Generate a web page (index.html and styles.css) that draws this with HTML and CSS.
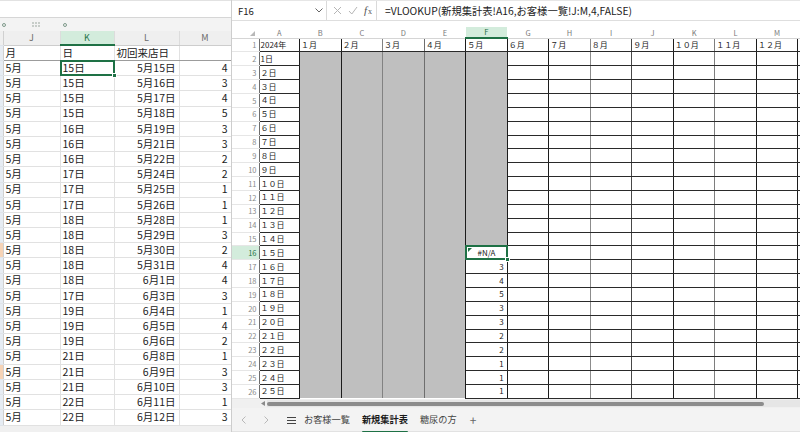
FILE: index.html
```html
<!DOCTYPE html>
<html lang="ja">
<head>
<meta charset="utf-8">
<title>Excel</title>
<link rel="stylesheet" href="styles.css">
</head>
<body>
<div class="app">
  <section class="left">
    <div class="ltop"></div>
    <div class="outline">
      <span class="ring"></span>
      <svg class="grip" width="8" height="5" viewBox="0 0 8 5"><g fill="#7a8a80"><circle cx="1" cy="1" r="0.7"/><circle cx="4" cy="1" r="0.7"/><circle cx="7" cy="1" r="0.7"/><circle cx="1" cy="4" r="0.7"/><circle cx="4" cy="4" r="0.7"/><circle cx="7" cy="4" r="0.7"/></g></svg>
      <span class="ring ring2"></span>
    </div>
    <table class="lgrid">
      <colgroup><col class="c-stub"><col class="c-j"><col class="c-k"><col class="c-l"><col class="c-m"></colgroup>
      <thead>
        <tr class="colhdr"><th class="stub"></th><th>J</th><th class="sel">K</th><th>L</th><th>M</th></tr>
      </thead>
      <tbody>
        <tr class="hdrrow"><th class="stub"></th><td>月</td><td>日</td><td>初回来店日</td><td></td></tr>
        <tr><th class="stub"></th><td>5月</td><td class="active">15日<span class="handle"></span></td><td class="r">5月15日</td><td class="r">4</td></tr>
        <tr><th class="stub"></th><td>5月</td><td>15日</td><td class="r">5月16日</td><td class="r">3</td></tr>
        <tr><th class="stub"></th><td>5月</td><td>15日</td><td class="r">5月17日</td><td class="r">4</td></tr>
        <tr><th class="stub"></th><td>5月</td><td>15日</td><td class="r">5月18日</td><td class="r">5</td></tr>
        <tr><th class="stub"></th><td>5月</td><td>16日</td><td class="r">5月19日</td><td class="r">3</td></tr>
        <tr><th class="stub"></th><td>5月</td><td>16日</td><td class="r">5月21日</td><td class="r">3</td></tr>
        <tr><th class="stub"></th><td>5月</td><td>16日</td><td class="r">5月22日</td><td class="r">2</td></tr>
        <tr><th class="stub"></th><td>5月</td><td>17日</td><td class="r">5月24日</td><td class="r">2</td></tr>
        <tr><th class="stub"></th><td>5月</td><td>17日</td><td class="r">5月25日</td><td class="r">1</td></tr>
        <tr><th class="stub"></th><td>5月</td><td>17日</td><td class="r">5月26日</td><td class="r">1</td></tr>
        <tr><th class="stub"></th><td>5月</td><td>18日</td><td class="r">5月28日</td><td class="r">1</td></tr>
        <tr><th class="stub"></th><td>5月</td><td>18日</td><td class="r">5月29日</td><td class="r">3</td></tr>
        <tr><th class="stub o"></th><td>5月</td><td>18日</td><td class="r">5月30日</td><td class="r">2</td></tr>
        <tr><th class="stub"></th><td>5月</td><td>18日</td><td class="r">5月31日</td><td class="r">4</td></tr>
        <tr><th class="stub"></th><td>5月</td><td>18日</td><td class="r">6月1日</td><td class="r">4</td></tr>
        <tr><th class="stub"></th><td>5月</td><td>17日</td><td class="r">6月3日</td><td class="r">3</td></tr>
        <tr><th class="stub"></th><td>5月</td><td>19日</td><td class="r">6月4日</td><td class="r">1</td></tr>
        <tr><th class="stub"></th><td>5月</td><td>19日</td><td class="r">6月5日</td><td class="r">4</td></tr>
        <tr><th class="stub"></th><td>5月</td><td>19日</td><td class="r">6月6日</td><td class="r">2</td></tr>
        <tr><th class="stub"></th><td>5月</td><td>21日</td><td class="r">6月8日</td><td class="r">1</td></tr>
        <tr><th class="stub o"></th><td>5月</td><td>21日</td><td class="r">6月9日</td><td class="r">3</td></tr>
        <tr><th class="stub"></th><td>5月</td><td>21日</td><td class="r">6月10日</td><td class="r">3</td></tr>
        <tr><th class="stub"></th><td>5月</td><td>22日</td><td class="r">6月11日</td><td class="r">1</td></tr>
        <tr><th class="stub"></th><td>5月</td><td>22日</td><td class="r">6月12日</td><td class="r">3</td></tr>
      </tbody>
    </table>
  </section>

  <section class="right">
    <div class="fbar">
      <div class="namebox">
        <span>F16</span>
        <svg width="8" height="5" viewBox="0 0 8 5"><polyline points="0.5,0.5 4,4 7.5,0.5" fill="none" stroke="#666" stroke-width="1"/></svg>
      </div>
      <div class="fxbtns">
        <svg width="9" height="9" viewBox="0 0 9 9"><path d="M1 1 L8 8 M8 1 L1 8" stroke="#b5b5b5" stroke-width="1" fill="none"/></svg>
        <svg width="10" height="9" viewBox="0 0 10 9"><polyline points="1,5 3.8,8 9,1" stroke="#b5b5b5" stroke-width="1" fill="none"/></svg>
        <span class="fx"><i>f</i><span>x</span></span>
      </div>
      <div class="formula">=VLOOKUP(新規集計表!A16,お客様一覧!J:M,4,FALSE)</div>
    </div>

    <div class="sheet">
      <table class="rgrid">
        <colgroup><col class="c-rh"><col class="c-a"><col><col><col><col><col><col><col><col><col><col><col><col><col class="c-x"></colgroup>
        <thead>
          <tr><th class="corner"><span class="tri"></span></th><th>A</th><th>B</th><th>C</th><th>D</th><th>E</th><th class="sel">F</th><th>G</th><th>H</th><th>I</th><th>J</th><th>K</th><th>L</th><th>M</th><th class="x"></th></tr>
        </thead>
        <tbody>
          <tr><th>1</th><td>2024年</td><td>１月</td><td>２月</td><td>３月</td><td>４月</td><td>５月</td><td>６月</td><td>７月</td><td>８月</td><td>９月</td><td>１０月</td><td>１１月</td><td>１２月</td><td></td></tr>
          <tr><th>2</th><td>1日</td><td class="g"></td><td class="g"></td><td class="g"></td><td class="g"></td><td class="g"></td><td></td><td></td><td></td><td></td><td></td><td></td><td></td><td></td></tr>
          <tr><th>3</th><td>２日</td><td class="g"></td><td class="g"></td><td class="g"></td><td class="g"></td><td class="g"></td><td></td><td></td><td></td><td></td><td></td><td></td><td></td><td></td></tr>
          <tr><th>4</th><td>３日</td><td class="g"></td><td class="g"></td><td class="g"></td><td class="g"></td><td class="g"></td><td></td><td></td><td></td><td></td><td></td><td></td><td></td><td></td></tr>
          <tr><th>5</th><td>４日</td><td class="g"></td><td class="g"></td><td class="g"></td><td class="g"></td><td class="g"></td><td></td><td></td><td></td><td></td><td></td><td></td><td></td><td></td></tr>
          <tr><th>6</th><td>５日</td><td class="g"></td><td class="g"></td><td class="g"></td><td class="g"></td><td class="g"></td><td></td><td></td><td></td><td></td><td></td><td></td><td></td><td></td></tr>
          <tr><th>7</th><td>６日</td><td class="g"></td><td class="g"></td><td class="g"></td><td class="g"></td><td class="g"></td><td></td><td></td><td></td><td></td><td></td><td></td><td></td><td></td></tr>
          <tr><th>8</th><td>７日</td><td class="g"></td><td class="g"></td><td class="g"></td><td class="g"></td><td class="g"></td><td></td><td></td><td></td><td></td><td></td><td></td><td></td><td></td></tr>
          <tr><th>9</th><td>８日</td><td class="g"></td><td class="g"></td><td class="g"></td><td class="g"></td><td class="g"></td><td></td><td></td><td></td><td></td><td></td><td></td><td></td><td></td></tr>
          <tr><th>10</th><td>９日</td><td class="g"></td><td class="g"></td><td class="g"></td><td class="g"></td><td class="g"></td><td></td><td></td><td></td><td></td><td></td><td></td><td></td><td></td></tr>
          <tr><th>11</th><td>１０日</td><td class="g"></td><td class="g"></td><td class="g"></td><td class="g"></td><td class="g"></td><td></td><td></td><td></td><td></td><td></td><td></td><td></td><td></td></tr>
          <tr><th>12</th><td>１１日</td><td class="g"></td><td class="g"></td><td class="g"></td><td class="g"></td><td class="g"></td><td></td><td></td><td></td><td></td><td></td><td></td><td></td><td></td></tr>
          <tr><th>13</th><td>１２日</td><td class="g"></td><td class="g"></td><td class="g"></td><td class="g"></td><td class="g"></td><td></td><td></td><td></td><td></td><td></td><td></td><td></td><td></td></tr>
          <tr><th>14</th><td>１３日</td><td class="g"></td><td class="g"></td><td class="g"></td><td class="g"></td><td class="g"></td><td></td><td></td><td></td><td></td><td></td><td></td><td></td><td></td></tr>
          <tr><th>15</th><td>１４日</td><td class="g"></td><td class="g"></td><td class="g"></td><td class="g"></td><td class="g"></td><td></td><td></td><td></td><td></td><td></td><td></td><td></td><td></td></tr>
          <tr><th class="sel">16</th><td>１５日</td><td class="g"></td><td class="g"></td><td class="g"></td><td class="g"></td><td class="cur"><span class="err"></span>#N/A<span class="handle"></span></td><td></td><td></td><td></td><td></td><td></td><td></td><td></td><td></td></tr>
          <tr><th>17</th><td>１６日</td><td class="g"></td><td class="g"></td><td class="g"></td><td class="g"></td><td class="n">3</td><td></td><td></td><td></td><td></td><td></td><td></td><td></td><td></td></tr>
          <tr><th>18</th><td>１７日</td><td class="g"></td><td class="g"></td><td class="g"></td><td class="g"></td><td class="n">4</td><td></td><td></td><td></td><td></td><td></td><td></td><td></td><td></td></tr>
          <tr><th>19</th><td>１８日</td><td class="g"></td><td class="g"></td><td class="g"></td><td class="g"></td><td class="n">5</td><td></td><td></td><td></td><td></td><td></td><td></td><td></td><td></td></tr>
          <tr><th>20</th><td>１９日</td><td class="g"></td><td class="g"></td><td class="g"></td><td class="g"></td><td class="n">3</td><td></td><td></td><td></td><td></td><td></td><td></td><td></td><td></td></tr>
          <tr><th>21</th><td>２０日</td><td class="g"></td><td class="g"></td><td class="g"></td><td class="g"></td><td class="n">3</td><td></td><td></td><td></td><td></td><td></td><td></td><td></td><td></td></tr>
          <tr><th>22</th><td>２１日</td><td class="g"></td><td class="g"></td><td class="g"></td><td class="g"></td><td class="n">2</td><td></td><td></td><td></td><td></td><td></td><td></td><td></td><td></td></tr>
          <tr><th>23</th><td>２２日</td><td class="g"></td><td class="g"></td><td class="g"></td><td class="g"></td><td class="n">2</td><td></td><td></td><td></td><td></td><td></td><td></td><td></td><td></td></tr>
          <tr><th>24</th><td>２３日</td><td class="g"></td><td class="g"></td><td class="g"></td><td class="g"></td><td class="n">1</td><td></td><td></td><td></td><td></td><td></td><td></td><td></td><td></td></tr>
          <tr><th>25</th><td>２４日</td><td class="g"></td><td class="g"></td><td class="g"></td><td class="g"></td><td class="n">1</td><td></td><td></td><td></td><td></td><td></td><td></td><td></td><td></td></tr>
          <tr><th>26</th><td>２５日</td><td class="g"></td><td class="g"></td><td class="g"></td><td class="g"></td><td class="n">1</td><td></td><td></td><td></td><td></td><td></td><td></td><td></td><td></td></tr>
        </tbody>
      </table>
    </div>

    <div class="hscroll">
      <svg class="sarrow" width="4" height="5" viewBox="0 0 4 5"><polygon points="4,0 4,5 0,2.5" fill="#8a8a8a"/></svg>
      <div class="track"><div class="thumb"></div></div>
    </div>

    <div class="tabs">
      <span class="nav"><svg width="5" height="8" viewBox="0 0 5 8"><polyline points="4.5,0.5 1,4 4.5,7.5" fill="none" stroke="#b8b8b8" stroke-width="1"/></svg></span>
      <span class="nav"><svg width="5" height="8" viewBox="0 0 5 8"><polyline points="0.5,0.5 4,4 0.5,7.5" fill="none" stroke="#b8b8b8" stroke-width="1"/></svg></span>
      <span class="menu"><svg width="9" height="7" viewBox="0 0 9 7"><path d="M0 0.5H9M0 3.5H9M0 6.5H9" stroke="#444" stroke-width="1"/></svg></span>
      <span class="tab">お客様一覧</span>
      <span class="tab active">新規集計表</span>
      <span class="tab">糖尿の方</span>
      <span class="plus">+</span>
    </div>
  </section>
</div>
</body>
</html>
```

FILE: styles.css
```css
* { box-sizing: border-box; margin: 0; padding: 0; }
html, body { width: 800px; height: 432px; overflow: hidden; background: #fff; }
body { font-family: "Noto Sans CJK JP", "Noto Sans", sans-serif; color: #222; }

.app { display: flex; width: 800px; height: 432px; }

/* ---------- left window ---------- */
.left {
  width: 231px; flex: none; display: flex; flex-direction: column;
  background: #f0f0f0; overflow: hidden;
}
.ltop { height: 18px; flex: none; background: #fff; border-top: 1px solid #e2e2e2; border-bottom: 1px solid #d6d6d6; }
.outline { height: 13px; flex: none; display: flex; align-items: center; background: #f3f3f3; padding-left: 2px; }
.ring { width: 4px; height: 4px; border: 1px solid #7f9a8b; border-radius: 50%; }
.grip { margin-left: 26px; }
.ring2 { margin-left: 23px; }

.lgrid { border-collapse: collapse; table-layout: fixed; width: 231px; font-size: 10.5px; background: #fff; }
.c-stub { width: 3px; }
.c-j { width: 57px; }
.c-k { width: 54px; }
.c-l { width: 65px; }
.c-m { width: 52px; }

.lgrid .colhdr th {
  height: 14px; background: #efefef; color: #6a6a6a; font-weight: normal; font-size: 9px;
  border-right: 1px solid #dcdcdc; border-bottom: 1px solid #cdcdcd; line-height: 1;
}
.lgrid .colhdr th.sel { background: #d3ecdc; color: #1e7145; border-bottom: 2px solid #1e7145; }
.lgrid .colhdr th.stub { background: #efefef; }
.lgrid th.stub { background: #e6ecf3; padding: 0; border-right: 1px solid #d0d0d0; border-bottom: 1px solid #dfe4ea; }
.lgrid th.stub.o { background: #f6d3b6; }

.lgrid td {
  height: 15.2px; padding: 0 2px; line-height: 1; white-space: nowrap; overflow: hidden;
  border-right: 1px solid #e1e1e1; border-bottom: 1px solid #e1e1e1;
}
.lgrid .hdrrow td { height: 15.5px; border-bottom-color: #9c9c9c; }
.lgrid td.r { text-align: right; padding-right: 3px; }
.lgrid td.active { position: relative; overflow: visible; }
.lgrid td.active::after {
  content: ""; position: absolute; left: -1px; top: -1px; right: -1px; bottom: -1px;
  border: 2px solid #1e7145;
}
.handle {
  position: absolute; right: -3px; bottom: -3px; width: 5px; height: 5px;
  background: #1e7145; border: 1px solid #fff; z-index: 2;
}

/* ---------- right window ---------- */
.right {
  flex: 1; min-width: 0; display: flex; flex-direction: column;
  border-left: 1px solid #cdcdcd; background: #f3f3f3;
}
.fbar {
  height: 21px; flex: none; display: flex; background: #fff;
  border-top: 1px solid #e6e6e6; border-bottom: 1px solid #dedede;
}
.namebox {
  width: 95px; display: flex; align-items: center; justify-content: space-between;
  padding: 0 3px 0 6px; font-size: 9.5px; color: #222; border-right: 1px solid #dadada;
}
.fxbtns {
  width: 50px; display: flex; align-items: center; gap: 6px; padding-left: 6px;
  border-right: 1px solid #dadada;
}
.fx { font-family: "Liberation Serif", serif; font-size: 11px; color: #555; line-height: 1; }
.fx span { font-size: 8px; margin-left: 1px; }
.formula {
  flex: 1; display: flex; align-items: center; padding-left: 8px;
  font-size: 10.3px; color: #222; white-space: nowrap; overflow: hidden;
}

.sheet { height: 378px; flex: none; background: #fff; padding-top: 6px; overflow: hidden; }

.rgrid { border-collapse: collapse; table-layout: fixed; width: 600px; font-size: 8px; }
.rgrid col { width: 41.5px; }
.rgrid col.c-rh { width: 27px; }
.rgrid col.c-a { width: 40.5px; }
.rgrid col.c-x { width: 34px; }

.rgrid thead th {
  height: 11px; font-size: 7.5px; font-weight: normal; color: #7a7a7a; background: #fff;
  border-bottom: 1px solid #d5d5d5; line-height: 1;
}
.rgrid thead th.sel { background: #d3ecdc; color: #1e7145; border-bottom: 2px solid #1e7145; }
.rgrid thead th.corner { position: relative; }
.tri {
  position: absolute; right: 4px; bottom: 2px; width: 0; height: 0;
  border-left: 5px solid transparent; border-bottom: 5px solid #b8b8b8;
}

.rgrid tbody th {
  font-size: 7.5px; font-weight: normal; color: #8a8a8a; text-align: right; padding-right: 2px;
  background: #fff; border-right: 1px solid #6e6e6e; border-bottom: 1px solid #e6e6e6; line-height: 1;
}
.rgrid tbody th.sel { background: #d3ecdc; color: #1e7145; }

.rgrid td {
  height: 13.87px; padding: 0 1px; line-height: 1; white-space: nowrap; overflow: hidden;
  border-right: 1px solid #1c1c1c; border-bottom: 1px solid #2a2a2a; color: #222;
}
.rgrid td:nth-child(4) { border-right-color: #828282; }
.rgrid td:nth-child(5) { border-right-color: #6e6e6e; }
.rgrid td:nth-child(9) { border-right-color: #8c8c8c; }
.rgrid td:nth-child(10) { border-right-color: #474747; }
.rgrid td:nth-child(12) { border-right-color: #7e7e7e; }
.rgrid td:nth-child(15) { border-right: none; }
.rgrid td.g { background: #bfbfbf; border-bottom: none; }
.rgrid td.n { text-align: right; padding-right: 3px; }
.rgrid td.cur { position: relative; overflow: visible; text-align: center; }
.rgrid td.cur::after {
  content: ""; position: absolute; left: -1px; top: -1px; right: -1px; bottom: -1px;
  border: 2px solid #1e7145;
}
.err {
  position: absolute; left: 2px; top: 2px; width: 0; height: 0;
  border-top: 4px solid #217346; border-right: 4px solid transparent;
}

/* scrollbar */
.hscroll { height: 9px; flex: none; display: flex; align-items: center; background: #f0f0f0; padding-left: 29px; }
.sarrow { flex: none; }
.track { flex: 1; height: 7px; display: flex; align-items: center; background: #e6e6e6; margin-left: 2px; }
.thumb { width: 497px; height: 4px; border-radius: 2px; background: #8c8c8c; }

/* sheet tabs */
.tabs {
  height: 24px; flex: none; display: flex; align-items: center; padding: 1px 0 0 9px;
  background: #f3f3f3; font-size: 9.2px; color: #444; border-bottom: 1px solid #e2e2e2;
}
.nav { width: 23px; display: flex; align-items: center; }
.menu { width: 17px; display: flex; align-items: center; }
.tab { position: relative; margin-right: 12px; white-space: nowrap; line-height: 1; }
.tab.active { color: #1a1a1a; font-weight: 700; }
.tab.active::after {
  content: ""; position: absolute; left: 0; right: 0; bottom: -9px; height: 2.5px;
  background: #1e7145; border-radius: 1px;
}
.plus { font-size: 12px; color: #666; margin-left: 1px; line-height: 1; }
```
